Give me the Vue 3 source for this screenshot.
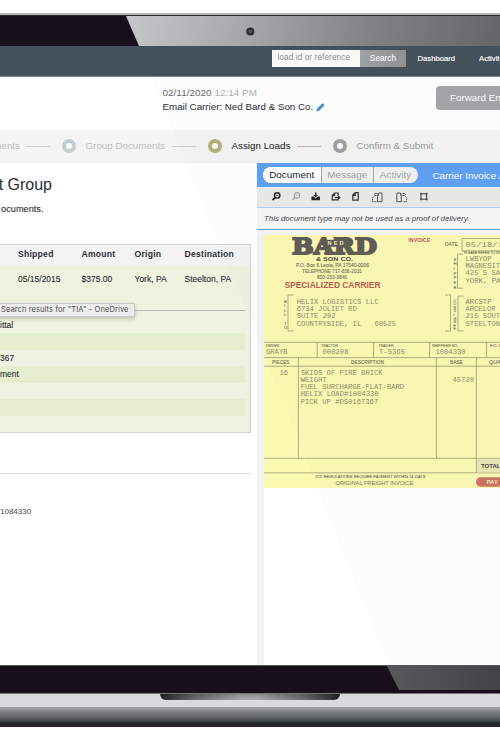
<script setup>
const columns = ['Shipped', 'Amount', 'Origin', 'Destination']
const values = ['05/15/2015', '$375.00', 'York, PA', 'Steelton, PA']
const details = ['ittal', '', '367', 'ment', '', '', '']
const tabs = ['Document', 'Message', 'Activity']

// Invoice scan text: x, baseline, width, font size, text, style
const scan = [
  [316, 260.8, 37, 4.8, '& SON CO.', 'bold'],
  [296, 266.6, 73, 4.9, 'P.O. Box 6  Leola, PA 17540-0006', 'sans'],
  [302, 272.5, 60, 4.9, 'TELEPHONE 717-656-2031', 'sans'],
  [317, 278.6, 30, 4.9, '800-233-3846', 'sans'],
  [284.5, 288.4, 96, 8.6, 'SPECIALIZED CARRIER', 'red'],
  [408.3, 242.4, 22, 5.2, 'INVOICE', 'red'],
  [445, 246.4, 14, 5.2, 'DATE:', 'sans'],
  [465.5, 247, 43, 7.2, '05/18/15', 'mono'],
  [464, 254.2, 46, 3.8, 'PLEASE REFER TO INVOICE', 'sans'],
  [465.5, 261, 26, 7.2, 'LWBYOP', 'mono'],
  [465.5, 268.2, 39, 7.2, 'MAGNESITA', 'mono'],
  [465.5, 275.4, 39, 7.2, '425 S SAL', 'mono'],
  [465.5, 282.6, 35, 7.2, 'YORK, PA', 'mono'],
  [296.7, 304, 82, 7.2, 'HELIX LOGISTICS LLC', 'mono'],
  [296.7, 311.2, 60, 7.2, '6734 JOLIET RD', 'mono'],
  [296.7, 318.4, 39, 7.2, 'SUITE 202', 'mono'],
  [296.7, 325.6, 64.5, 7.2, 'COUNTRYSIDE, IL', 'mono'],
  [374.5, 325.6, 21.5, 7.2, '60525', 'mono'],
  [465.5, 304, 26, 7.2, 'ARCSTP', 'mono'],
  [465.5, 311.2, 30, 7.2, 'ARCELOR', 'mono'],
  [465.5, 318.4, 39, 7.2, '215 SOUTH', 'mono'],
  [465.5, 325.6, 39, 7.2, 'STEELTON,', 'mono'],
  [266, 346.6, 13, 3.6, 'DRIVER', 'sans'],
  [321, 346.6, 17, 3.6, 'TRACTOR', 'sans'],
  [378.5, 346.6, 15, 3.6, 'TRAILER', 'sans'],
  [432, 346.6, 26, 3.6, 'SHIPPERS NO.', 'sans'],
  [490, 346.6, 16, 3.6, 'P.O. NO.', 'sans'],
  [266, 353.9, 21.5, 6.8, 'GRAYB', 'mono'],
  [322.5, 353.9, 26, 6.8, '000208', 'mono'],
  [379, 353.9, 26, 6.8, 'T-5365', 'mono'],
  [435.5, 353.9, 30, 6.8, '1084330', 'mono'],
  [272, 363.6, 17.5, 4.8, 'PIECES', 'sans'],
  [351, 363.6, 33, 4.8, 'DESCRIPTION', 'sans'],
  [450, 363.6, 13, 4.8, 'BASE', 'sans'],
  [489, 363.6, 27, 4.8, 'QUANTITY', 'sans'],
  [279.5, 374.8, 8.5, 7.2, '16', 'mono'],
  [300.7, 374.8, 82, 7.2, 'SKIDS OF FIRE BRICK', 'mono'],
  [300.7, 382, 26, 7.2, 'WEIGHT', 'mono'],
  [452.5, 382, 21.5, 7.2, '45720', 'mono'],
  [300.7, 389.2, 103.5, 7.2, 'FUEL SURCHARGE-FLAT-BARD', 'mono'],
  [300.7, 396.4, 78, 7.2, 'HELIX LOAD#1084330', 'mono'],
  [300.7, 403.7, 77.5, 7.2, 'PICK UP #DS0167367', 'mono'],
  [481, 468, 19.5, 5.6, 'TOTAL', 'bold'],
  [315.5, 477.9, 110, 4.4, 'ICC REGULATIONS REQUIRE PAYMENT WITHIN 14 DAYS', 'sans'],
  [335.5, 485.4, 78, 5.6, 'ORIGINAL  FREIGHT  INVOICE', 'thin'],
  [486.5, 484.2, 11.5, 5.2, 'PAY', 'pay'],
]
// Letters stacked beside the address brackets: x, first baseline, step, size, letters
const stacks = [
  [284, 302.5, 4.6, 4.2, 'BIL'],
  [284, 316.3, 4.6, 4.2, 'L'],
  [284, 324.5, 4.6, 4.2, 'TO'],
  [453.5, 260.5, 4.7, 4.2, 'SHIPPER'],
  [453.5, 301.5, 3.6, 3.5, 'CONSIGNEE'],
]
</script>

<template>
  <div class="page">
    <div class="lid"></div>
    <div class="bezel top"></div>

    <nav class="nav">
      <div class="field"><span>load id or reference</span></div>
      <div class="search">Search</div>
      <span class="link dash">Dashboard</span>
      <span class="link">Activity</span>
    </nav>

    <header class="head">
      <div class="meta">
        <div class="date">02/11/2020 <span>12:14 PM</span></div>
        <div class="carrier">
          <span>Email Carrier: Ned Bard &amp; Son Co.</span>
          <svg width="9" height="9" viewBox="0 0 9 9">
            <path d="M0.4 8.4 L1 5.7 L5.7 .9 Q6.700 0 7.800 1.100 Q8.800 2.100 8 3 L3.100 7.800 Z" fill="#4a84d0" />
            <path d="M5.100 1.800 L7 3.600" stroke="#a9c8ee" stroke-width=".5" />
          </svg>
        </div>
      </div>
      <div class="forward">Forward Email</div>
    </header>

    <div class="steps">
      <span class="step first faded">ments</span>
      <i class="dashline faded"></i><b class="ring blue"></b>
      <span class="step group faded">Group Documents</span>
      <i class="dashline faded"></i><b class="ring gold"></b>
      <span class="step assign">Assign Loads</span>
      <i class="dashline"></i><b class="ring"></b>
      <span class="step confirm">Confirm &amp; Submit</span>
    </div>

    <main class="main">
      <section class="left">
        <h1>t Group</h1>
        <p class="sub">ocuments.</p>
        <div class="table">
          <div class="grid thead"><span v-for="c in columns" :key="c">{{ c }}</span></div>
          <div class="grid tbody"><span v-for="v in values" :key="v">{{ v }}</span></div>
          <div class="rule"><span class="tip">Search results for "TIA" - OneDrive</span></div>
          <div class="details">
            <div v-for="(d, i) in details" :key="i" class="detail" :class="{ band: i % 2 }">{{ d }}</div>
          </div>
        </div>
        <div class="sep"></div>
        <p class="num">1084330</p>
      </section>

      <section class="right">
        <div class="bar">
          <div class="tabs">
            <span v-for="(t, i) in tabs" :key="t" class="tab" :class="['t' + i]">{{ t }}</span>
          </div>
          <span class="title">Carrier Invoice A</span>
        </div>
        <div class="tools">
          <svg width="172" height="20" viewBox="265 187 172 20" fill="none" stroke="#222" stroke-width="1.2">
            <circle cx="277.2" cy="195.400" r="2.700" stroke-width="1.400" /><path d="M275 197.600 L272.600 200" stroke-width="1.800" /><path d="M275.800 195.400h2.800" stroke-width=".8" />
            <g stroke="#aaa"><circle cx="297" cy="195.400" r="2.700" /><path d="M294.900 197.600 L292.600 200" stroke-width="1.500" /><path d="M295.700 195.400h2.600" stroke-width=".7" /></g>
            <path d="M311.500 196.600h2.200l2 2 2-2h2.200v3.600h-8.400z M315 192.600h1.400v2.400h1.600l-2.300 2.400-2.300-2.400h1.600z" fill="#222" stroke="none" />
            <path d="M338 196v-3h-3.400l-2.400 2.500v4.400h5.800v-1.200 M334.600 193v2.600h-2.300 M334.800 197.600h4.400" stroke="#333" /><path d="M338.200 195.400l2.600 2.200-2.600 2.200z" fill="#222" stroke="none" />
            <path d="M358.200 192.700h-3.100l-2.300 2.400v5.100h5.400z M355.200 192.900v2.400h-2.100 M358.300 193v7.200" stroke="#333" />
            <g stroke="#555" stroke-width="1"><path d="M378.600 193h3.400v8.700h-4.400v-6.600z M378.600 193.400v2.200" /><path d="M376.600 195.500h-1.900l-2.100 2v4.200h4" stroke-dasharray="1.500 .6" /><path d="M374 194.600q1.200-1.800 3.300-1.200" /></g>
            <g stroke="#555" stroke-width="1"><path d="M400.500 193h-3.700v8.700h4.500v-6.500z M400.500 193.400v2.200" /><path d="M402.500 195.500h2l2.100 2v4.200h-4" stroke-dasharray="1.500 .6" /><path d="M402.300 193.500q2.200-.6 3.400 1.300" /></g>
            <path d="M421 192.700v7.600 M426.600 192.700v7.600 M420 193.900h7.600 M420 199.200h7.600" stroke="#333" stroke-width="1" />
          </svg>
        </div>
        <div class="note">This document type may not be used as a proof of delivery.</div>
        <div class="viewer">
          <svg class="invoice" width="236" height="253" viewBox="264 235 236 253">
            <rect x="264" y="235" width="236" height="253" fill="#fcf9b3" />
            <text x="292" y="254.300" textLength="85" lengthAdjust="spacingAndGlyphs" class="logo">BARD</text>
            <rect x="323" y="239.800" width="24" height="7" fill="#5f5c54" />
            <text x="327.500" y="245.400" textLength="16" class="ned">NED</text>
            <g fill="none" stroke="#96946e" stroke-width=".75">
              <path d="M293.500 295h-5.500v36h5.500 M445 295h5.500v36H445 M463.500 296h-5.500v35h5.500 M463 254.200h-5.500v34h5.500" />
              <path d="M462 250.800v-12.300h38 M462 250.800h38" />
              <path d="M264 342.300h236 M264 357.600h236 M264 366.200h236 M264 458.300h236 M264 472.800h236" />
              <path d="M317.200 342v15.600 M373.600 342v15.600 M429.600 342v15.600 M486.600 342v15.600" />
              <path d="M298.400 357.600v100.700 M436.400 357.600v100.700 M476.400 357.600v115" />
            </g>
            <rect x="477" y="458.800" width="23" height="13.600" fill="#e9e7b5" />
            <rect x="476" y="477.300" width="36" height="9.400" rx="4.700" fill="#cb7460" />
            <text v-for="(t, i) in scan" :key="i" :x="t[0]" :y="t[1]" :textLength="t[2]" lengthAdjust="spacingAndGlyphs" :font-size="t[3]" :class="t[5]">{{ t[4] }}</text>
            <g v-for="(s, i) in stacks" :key="'s' + i">
              <text v-for="(c, j) in s[4]" :key="j" :x="s[0]" :y="s[1] + j * s[2]" :font-size="s[3]" class="sans">{{ c }}</text>
            </g>
          </svg>
        </div>
      </section>
    </main>

    <div class="bezel bottom"></div>
    <div class="deck"><div class="notch"></div></div>
    <div class="base"></div>

    <svg class="glare" width="500" height="748" viewBox="0 0 500 748">
      <defs>
        <linearGradient id="gt" x1="126" x2="500" y1="0" y2="90" gradientUnits="userSpaceOnUse">
          <stop offset="0" stop-color="#c6c8c9" /><stop offset=".35" stop-color="#a2a4a7" />
          <stop offset=".65" stop-color="#7f8184" /><stop offset="1" stop-color="#626367" />
        </linearGradient>
        <linearGradient id="gb"><stop offset="0" stop-color="#59595c" /><stop offset="1" stop-color="#434346" /></linearGradient>
      </defs>
      <path d="M126 16H500V46H139Z" fill="url(#gt)" />
      <circle cx="250.300" cy="31.500" r="4.100" fill="#2e2e31" /><circle cx="250.300" cy="31.500" r="1.800" fill="#55565a" />
      <path d="M151.500 77H500V665H389Z" fill="#777" opacity=".025" />
      <path d="M387 666H500V690H399Z" fill="url(#gb)" />
    </svg>
  </div>
</template>

<style>
body { margin: 0; background: #fff; }
</style>

<style scoped>
* { box-sizing: border-box; }
.page { position: relative; width: 500px; height: 748px; overflow: hidden; background: #fff; font-family: "Liberation Sans", Arial, sans-serif; color: #2b2d33; white-space: nowrap; }
.lid { height: 16px; border-bottom: 1px solid #2c2c2e; background: linear-gradient(#fff 13px, #b4b5b6 13px); }
.bezel { background: #17101b; }
.top { height: 30px; }
.nav { height: 31px; background: #44505a; border-bottom: 1px solid #7d858b; display: flex; align-items: flex-start; padding: 4px 0 0 272px; color: #fff; }
.field { flex: none; width: 88px; height: 17px; background: #f8f8f6; color: #8d8f91; font-size: 8.200px; letter-spacing: .1px; line-height: 16px; padding-left: 5.500px; }
.search { flex: none; width: 46px; height: 17px; background: linear-gradient(100deg, #a0a3a5, #8d9194); font-size: 8.300px; line-height: 16px; text-align: center; }
.link { font-size: 7.700px; line-height: 17px; -webkit-text-stroke: .15px #fff; }
.dash { width: 61.500px; margin-left: 11.500px; flex: none; }
.head { height: 53px; display: flex; padding-left: 162.500px; }
.meta { width: 273.500px; padding-top: 9px; flex: none; }
.date { font-size: 9.900px; line-height: 14px; letter-spacing: .04px; color: #66686d; }
.date span { color: #aeb0b3; }
.carrier { display: flex; align-items: center; gap: 3px; font-size: 9.750px; line-height: 14px; }
.forward { flex: none; width: 90px; height: 24px; margin-top: 9px; border-radius: 4px; background: #a3a5a7; color: #fff; font-size: 9.800px; line-height: 23px; padding-left: 14px; }
.steps { height: 33px; background: #f4f4f2; display: flex; align-items: center; padding-bottom: 1px; font-size: 9.800px; color: #9b9da0; }
.step { flex: none; line-height: 32px; }
.first { width: 20px; display: flex; justify-content: flex-end; }
.faded { opacity: .62; }
.dashline { flex: none; width: 24px; height: 1px; background: #b5b7b9; margin-left: 6px; margin-top: 1px; }
.ring { flex: none; width: 14px; height: 14px; border: 4.500px solid #9da0a2; border-radius: 50%; background: #fff; margin: 0 9.500px 0 12px; }
.blue { border-color: #c3cbd3; }
.gold { border-color: #b5b17d; }
.group { width: 80.500px; }
.assign { width: 59.500px; color: #17181b; }
.main { height: 502px; display: flex; }
.left { width: 257px; flex: none; }
h1 { margin: 0; width: 52px; height: 42px; display: flex; justify-content: flex-end; font-size: 16px; font-weight: 400; line-height: 43px; }
.sub { margin: 0; width: 43.500px; height: 39px; display: flex; justify-content: flex-end; font-size: 9.200px; line-height: 9px; -webkit-text-stroke: .1px; }
.table { width: 251px; height: 189px; background: #eff2e0; border: 1px solid #d3d5d0; border-left: 0; }
.grid { display: grid; grid-template-columns: 63.500px 53px 50px 60px; padding-left: 18px; }
.thead { height: 20px; background: #f3f3f3; font-size: 8.600px; font-weight: 700; line-height: 19px; letter-spacing: .25px; }
.tbody { height: 45px; font-size: 8.500px; line-height: 29px; -webkit-text-stroke: .1px; }
.rule { position: relative; height: 1px; width: 244.500px; background: #b9bbbb; }
.tip { position: absolute; left: -5px; top: -7px; width: 140px; height: 14px; padding-left: 5px; background: #ececec; border: 1px solid #c9c9c9; box-shadow: 0 2px 4px rgba(80, 90, 60, .3); font: 7.500px/12px Inter, sans-serif; letter-spacing: .1px; color: #4c4d50; }
.details { padding-top: 5.500px; width: 244.500px; }
.detail { height: 16.500px; font-size: 8.500px; line-height: 16px; -webkit-text-stroke: .1px; }
.band { background: #e5eecf; }
.sep { height: 41px; width: 251px; border-bottom: 1px solid #dcdcdc; }
.num { margin: 32px 0 0; font-size: 8px; line-height: 12px; color: #44464a; }
.right { width: 243px; flex: none; display: flex; flex-direction: column; background: #fff; }
.bar { height: 24px; background: #5fa0f4; display: flex; align-items: center; padding-left: 6px; }
.tabs { flex: none; display: flex; height: 16px; border-radius: 8px; overflow: hidden; background: #f2f2f2; font-size: 9.900px; line-height: 16px; color: #a1a3a6; }
.tab { flex: none; text-align: center; border-left: 1px solid #a5a9ae; }
.t0 { width: 57.500px; border: 0; background: #fff; color: #24262a; }
.t1 { width: 52.500px; }
.t2 { width: 45px; padding-right: 1px; }
.title { margin-left: 14.500px; font-size: 9.800px; color: #fff; }
.tools { height: 21px; padding-left: 8px; background: #e9eaea; border-bottom: 1px solid #acd0f5; }
.note { height: 22px; flex: none; background: #f6f6f6; border-bottom: 1px solid #5c9ded; padding-left: 7px; font-size: 7.850px; line-height: 22px; font-style: italic; color: #45474d; }
.viewer { flex: 1; padding: 5px 0 0; background: linear-gradient(90deg, #f3f3f3 7px, transparent 7px); display: flex; justify-content: flex-end; box-shadow: inset 0 6px #f5f5f5; }
.logo { font: 700 23px "DejaVu Serif", serif; fill: #5f5c54; stroke: #5f5c54; stroke-width: 1.900; }
.ned { font: 700 5.600px "Liberation Sans", sans-serif; fill: #efecb0; }
.mono { font-family: "Liberation Mono", monospace; fill: #8f8d69; }
.sans { fill: #6c6a52; stroke: #6c6a52; stroke-width: .08; }
.thin { fill: #77755a; }
.bold { fill: #4b4a43; font-weight: 700; }
.red { fill: #bb5b50; font-weight: 700; }
.pay { fill: #f7e3c0; font-weight: 700; }
.bottom { height: 28px; border-top: 1px solid #56585a; }
.deck { height: 14px; background: #d9dadc; border-top: 1px solid #77747a; display: flex; justify-content: center; }
.notch { width: 180px; height: 6px; border-radius: 0 0 7px 7px; background: linear-gradient(#0003, transparent), linear-gradient(90deg, #252528, #6e6f72 20%, #aaacae 45%, #aaacae 55%, #6e6f72 80%, #252528); }
.base { height: 20px; background: linear-gradient(#a4a6a9, #7d8083 25%, #626669 50%, #44494c 70%, #272729 78%, #242426); }
.glare { position: absolute; left: 0; top: 0; pointer-events: none; }
</style>
